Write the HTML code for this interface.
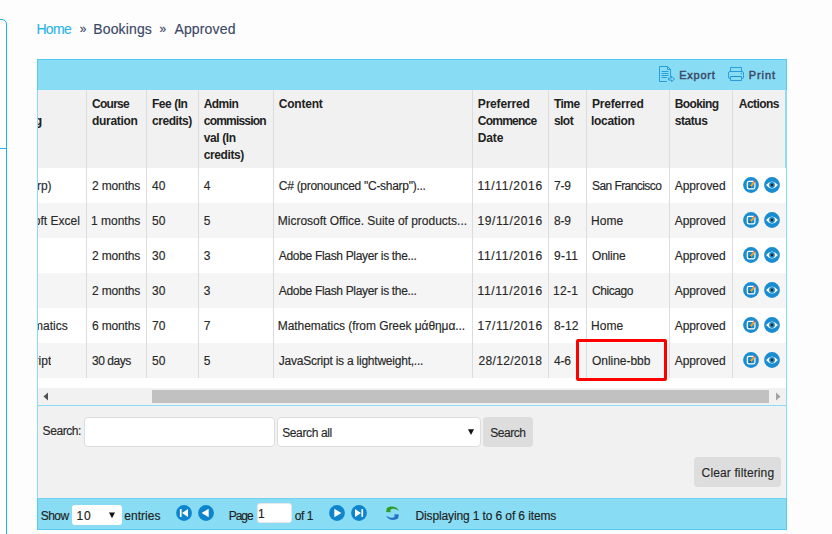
<!DOCTYPE html>
<html><head><meta charset="utf-8"><title>Bookings - Approved</title>
<style>
html,body{margin:0;padding:0}
body{width:832px;height:534px;overflow:hidden;background:#fdfdfd;font-family:"Liberation Sans",sans-serif;font-size:12px;line-height:17px;color:#333;position:relative}
.a{position:absolute}
.t{position:absolute;white-space:nowrap;line-height:17px;height:17px;-webkit-text-stroke:0.15px currentColor}
.b{font-weight:700;-webkit-text-stroke:0 currentColor}
.c{position:absolute;left:38px;width:48px;height:17px;overflow:hidden}
.c span{position:absolute;right:0;top:0;white-space:nowrap;-webkit-text-stroke:0.15px currentColor}
svg{position:absolute;overflow:visible}
</style></head><body>

<div class="a" style="left:-20px;top:19px;width:27px;height:560px;border:1px solid #1cb3e9;border-radius:5px;background:#fefefe;box-sizing:border-box"></div>
<div class="a" style="left:0;top:148px;width:6px;height:1px;background:#1cb3e9"></div>
<div class="a" style="left:37px;top:59px;width:750px;height:31px;background:#88dcf4;border:1px solid #55caef;border-bottom:none;box-sizing:border-box"></div>
<div class="a" style="left:37px;top:90px;width:750px;height:78px;background:#f1f1f1"></div>
<div class="a" style="left:37px;top:168px;width:750px;height:35px;background:#ffffff"></div>
<div class="a" style="left:37px;top:203px;width:750px;height:35px;background:#f5f5f5"></div>
<div class="a" style="left:37px;top:238px;width:750px;height:35px;background:#ffffff"></div>
<div class="a" style="left:37px;top:273px;width:750px;height:35px;background:#f5f5f5"></div>
<div class="a" style="left:37px;top:308px;width:750px;height:35px;background:#ffffff"></div>
<div class="a" style="left:37px;top:343px;width:750px;height:35px;background:#f5f5f5"></div>
<div class="a" style="left:37px;top:378px;width:750px;height:10px;background:#ffffff"></div>
<div class="a" style="left:86px;top:90px;width:1px;height:288px;background:#dcdcdc"></div>
<div class="a" style="left:146px;top:90px;width:1px;height:288px;background:#dcdcdc"></div>
<div class="a" style="left:198px;top:90px;width:1px;height:288px;background:#dcdcdc"></div>
<div class="a" style="left:273px;top:90px;width:1px;height:288px;background:#dcdcdc"></div>
<div class="a" style="left:472px;top:90px;width:1px;height:288px;background:#dcdcdc"></div>
<div class="a" style="left:548px;top:90px;width:1px;height:288px;background:#dcdcdc"></div>
<div class="a" style="left:586px;top:90px;width:1px;height:288px;background:#dcdcdc"></div>
<div class="a" style="left:669px;top:90px;width:1px;height:288px;background:#dcdcdc"></div>
<div class="a" style="left:732px;top:90px;width:1px;height:288px;background:#dcdcdc"></div>
<div class="a" style="left:37px;top:388px;width:750px;height:17px;background:#f1f1f1"></div>
<div class="a" style="left:152px;top:390px;width:617px;height:13px;background:#c1c1c1"></div>
<svg style="left:43px;top:392px" width="6" height="9" viewBox="0 0 6 9"><path d="M5 0.5 L5 8.5 L0.5 4.5 Z" fill="#505050"/></svg>
<svg style="left:775px;top:392px" width="6" height="9" viewBox="0 0 6 9"><path d="M1 0.5 L1 8.5 L5.5 4.5 Z" fill="#a3a3a3"/></svg>
<div class="a" style="left:37px;top:405px;width:750px;height:1px;background:#8bdcf4"></div>
<div class="a" style="left:37px;top:406px;width:750px;height:92px;background:#f1f1f1"></div>
<div class="a" style="left:37px;top:498px;width:750px;height:32px;background:#88dcf4;border:1px solid #55caef;border-top-color:#6fd2f1;box-sizing:border-box"></div>
<div class="a" style="left:37px;top:90px;width:1px;height:408px;background:#8bdcf4"></div>
<div class="a" style="left:786px;top:90px;width:1px;height:408px;background:#8bdcf4"></div>
<div class="a" style="left:785px;top:90px;width:1px;height:78px;background:#8bdcf4"></div>
<div class="a" style="left:84px;top:417px;width:191px;height:30px;background:#fff;border:1px solid #dddddd;border-radius:4px;box-sizing:border-box"></div>
<div class="a" style="left:277px;top:417px;width:204px;height:30px;background:#fff;border:1px solid #dddddd;border-radius:4px;box-sizing:border-box"></div>
<svg style="left:468px;top:429px" width="6" height="6" viewBox="0 0 6 6"><path d="M0 0.2 L6 0.2 L3 6 Z" fill="#111"/></svg>
<div class="a" style="left:483px;top:417px;width:50px;height:30px;background:#dddddd;border-radius:4px"></div>
<div class="a" style="left:694px;top:457px;width:87px;height:30px;background:#dddddd;border-radius:4px"></div>
<div class="a" style="left:72px;top:505px;width:50px;height:19.5px;background:#fff;border-radius:3px"></div>
<svg style="left:109px;top:512px" width="6" height="6" viewBox="0 0 6 6"><path d="M0 0.4 L6 0.4 L3 6.2 Z" fill="#111"/></svg>
<div class="a" style="left:257px;top:503px;width:35px;height:20px;background:#fff;border:1px solid #e6e6e6;border-radius:3px;box-sizing:border-box"></div>
<svg style="left:176px;top:505px" width="16" height="16" viewBox="0 0 16 16"><circle cx="8" cy="8" r="7.9" fill="#0e84cd"/><rect x="3.9" y="4.1" width="1.7" height="7.8" fill="#fff"/><path d="M6 8 L12 3.9 L12 12.1 Z" fill="#fff"/></svg>
<svg style="left:198px;top:505px" width="16" height="16" viewBox="0 0 16 16"><circle cx="8" cy="8" r="7.9" fill="#0e84cd"/><path d="M3.6 8 L10.7 3.8 L10.7 12.2 Z" fill="#fff"/></svg>
<svg style="left:329px;top:505px" width="16" height="16" viewBox="0 0 16 16"><circle cx="8" cy="8" r="7.9" fill="#0e84cd"/><path d="M12.4 8 L5.3 3.8 L5.3 12.2 Z" fill="#fff"/></svg>
<svg style="left:351px;top:505px" width="16" height="16" viewBox="0 0 16 16"><circle cx="8" cy="8" r="7.9" fill="#0e84cd"/><rect x="10.4" y="4.1" width="1.7" height="7.8" fill="#fff"/><path d="M10 8 L4 3.9 L4 12.1 Z" fill="#fff"/></svg>
<svg style="left:385px;top:506px" width="16" height="15" viewBox="0 0 16 15"><path d="M1.1 6 L1.9 1.9 Q6.5 -0.7 11 1.5 Q13 2.7 13.9 4.8 Q10.5 2.3 7.6 2.7 Q5.9 3 5.3 4 L5.7 6.3 Z" fill="#2f9d22"/><path d="M1.1 6 L1.9 1.9 Q6.5 -0.7 11 1.5 Q13 2.7 13.9 4.8 Q10.5 2.3 7.6 2.7 Q5.9 3 5.3 4 L5.7 6.3 Z" fill="#2473c0" transform="rotate(180 7.5 7.25)"/></svg>
<svg style="left:743px;top:177px" width="16" height="16" viewBox="0 0 16 16"><circle cx="8" cy="8" r="7.9" fill="#1a8cd0"/><rect x="4.3" y="4.4" width="7.6" height="7.4" rx="1.6" fill="none" stroke="#fff" stroke-width="1.2"/><path d="M6.9 8.9 L10.3 4.6 L11.8 5.8 L8.4 10.1 Z" fill="#f7a11a"/><path d="M10.3 4.6 L11.1 3.6 L12.6 4.8 L11.8 5.8 Z" fill="#e8464b"/><path d="M6.9 8.9 L8.4 10.1 L6.2 10.9 Z" fill="#1d2b3a"/></svg>
<svg style="left:764px;top:177px" width="16" height="16" viewBox="0 0 16 16"><circle cx="8" cy="8" r="7.9" fill="#1a8cd0"/><path d="M2 8 Q8 0.8 14 8 Q8 15.2 2 8 Z" fill="#fff"/><circle cx="8" cy="8" r="2.9" fill="#1b86c6"/><circle cx="8" cy="8" r="1.2" fill="#222"/></svg>
<svg style="left:743px;top:212px" width="16" height="16" viewBox="0 0 16 16"><circle cx="8" cy="8" r="7.9" fill="#1a8cd0"/><rect x="4.3" y="4.4" width="7.6" height="7.4" rx="1.6" fill="none" stroke="#fff" stroke-width="1.2"/><path d="M6.9 8.9 L10.3 4.6 L11.8 5.8 L8.4 10.1 Z" fill="#f7a11a"/><path d="M10.3 4.6 L11.1 3.6 L12.6 4.8 L11.8 5.8 Z" fill="#e8464b"/><path d="M6.9 8.9 L8.4 10.1 L6.2 10.9 Z" fill="#1d2b3a"/></svg>
<svg style="left:764px;top:212px" width="16" height="16" viewBox="0 0 16 16"><circle cx="8" cy="8" r="7.9" fill="#1a8cd0"/><path d="M2 8 Q8 0.8 14 8 Q8 15.2 2 8 Z" fill="#fff"/><circle cx="8" cy="8" r="2.9" fill="#1b86c6"/><circle cx="8" cy="8" r="1.2" fill="#222"/></svg>
<svg style="left:743px;top:247px" width="16" height="16" viewBox="0 0 16 16"><circle cx="8" cy="8" r="7.9" fill="#1a8cd0"/><rect x="4.3" y="4.4" width="7.6" height="7.4" rx="1.6" fill="none" stroke="#fff" stroke-width="1.2"/><path d="M6.9 8.9 L10.3 4.6 L11.8 5.8 L8.4 10.1 Z" fill="#f7a11a"/><path d="M10.3 4.6 L11.1 3.6 L12.6 4.8 L11.8 5.8 Z" fill="#e8464b"/><path d="M6.9 8.9 L8.4 10.1 L6.2 10.9 Z" fill="#1d2b3a"/></svg>
<svg style="left:764px;top:247px" width="16" height="16" viewBox="0 0 16 16"><circle cx="8" cy="8" r="7.9" fill="#1a8cd0"/><path d="M2 8 Q8 0.8 14 8 Q8 15.2 2 8 Z" fill="#fff"/><circle cx="8" cy="8" r="2.9" fill="#1b86c6"/><circle cx="8" cy="8" r="1.2" fill="#222"/></svg>
<svg style="left:743px;top:282px" width="16" height="16" viewBox="0 0 16 16"><circle cx="8" cy="8" r="7.9" fill="#1a8cd0"/><rect x="4.3" y="4.4" width="7.6" height="7.4" rx="1.6" fill="none" stroke="#fff" stroke-width="1.2"/><path d="M6.9 8.9 L10.3 4.6 L11.8 5.8 L8.4 10.1 Z" fill="#f7a11a"/><path d="M10.3 4.6 L11.1 3.6 L12.6 4.8 L11.8 5.8 Z" fill="#e8464b"/><path d="M6.9 8.9 L8.4 10.1 L6.2 10.9 Z" fill="#1d2b3a"/></svg>
<svg style="left:764px;top:282px" width="16" height="16" viewBox="0 0 16 16"><circle cx="8" cy="8" r="7.9" fill="#1a8cd0"/><path d="M2 8 Q8 0.8 14 8 Q8 15.2 2 8 Z" fill="#fff"/><circle cx="8" cy="8" r="2.9" fill="#1b86c6"/><circle cx="8" cy="8" r="1.2" fill="#222"/></svg>
<svg style="left:743px;top:317px" width="16" height="16" viewBox="0 0 16 16"><circle cx="8" cy="8" r="7.9" fill="#1a8cd0"/><rect x="4.3" y="4.4" width="7.6" height="7.4" rx="1.6" fill="none" stroke="#fff" stroke-width="1.2"/><path d="M6.9 8.9 L10.3 4.6 L11.8 5.8 L8.4 10.1 Z" fill="#f7a11a"/><path d="M10.3 4.6 L11.1 3.6 L12.6 4.8 L11.8 5.8 Z" fill="#e8464b"/><path d="M6.9 8.9 L8.4 10.1 L6.2 10.9 Z" fill="#1d2b3a"/></svg>
<svg style="left:764px;top:317px" width="16" height="16" viewBox="0 0 16 16"><circle cx="8" cy="8" r="7.9" fill="#1a8cd0"/><path d="M2 8 Q8 0.8 14 8 Q8 15.2 2 8 Z" fill="#fff"/><circle cx="8" cy="8" r="2.9" fill="#1b86c6"/><circle cx="8" cy="8" r="1.2" fill="#222"/></svg>
<svg style="left:743px;top:352px" width="16" height="16" viewBox="0 0 16 16"><circle cx="8" cy="8" r="7.9" fill="#1a8cd0"/><rect x="4.3" y="4.4" width="7.6" height="7.4" rx="1.6" fill="none" stroke="#fff" stroke-width="1.2"/><path d="M6.9 8.9 L10.3 4.6 L11.8 5.8 L8.4 10.1 Z" fill="#f7a11a"/><path d="M10.3 4.6 L11.1 3.6 L12.6 4.8 L11.8 5.8 Z" fill="#e8464b"/><path d="M6.9 8.9 L8.4 10.1 L6.2 10.9 Z" fill="#1d2b3a"/></svg>
<svg style="left:764px;top:352px" width="16" height="16" viewBox="0 0 16 16"><circle cx="8" cy="8" r="7.9" fill="#1a8cd0"/><path d="M2 8 Q8 0.8 14 8 Q8 15.2 2 8 Z" fill="#fff"/><circle cx="8" cy="8" r="2.9" fill="#1b86c6"/><circle cx="8" cy="8" r="1.2" fill="#222"/></svg>
<svg style="left:658px;top:65px" width="18" height="18" viewBox="0 0 18 18" fill="none" stroke="#2a9ddb" stroke-width="1"><path d="M1.5 1.5 L9.5 1.5 L12.5 4.5 L12.5 12 M9 16.5 L1.5 16.5 L1.5 1.5 M9.5 1.5 L9.5 4.5 L12.5 4.5"/><path d="M3.5 6.5 H10.5 M3.5 8.5 H10.5 M3.5 10.5 H10.5 M3.5 12.5 H9"/><path d="M10.5 13 H13.5 V11.3 L16.6 14 L13.5 16.7 V15 H10.5 Z" fill="#88dcf4"/></svg>
<svg style="left:727px;top:66px" width="18" height="16" viewBox="0 0 18 16" fill="none" stroke="#2a9ddb" stroke-width="1"><path d="M3.5 5.5 V1.5 H14.5 V5.5"/><rect x="1.5" y="5.5" width="15" height="7" rx="1.5"/><path d="M3.5 10.5 H14.5 V14.5 H3.5 Z" fill="#88dcf4"/><path d="M4.5 10.5 H13.5" stroke="#1f8fd0"/><circle cx="14.3" cy="7.6" r="0.4"/></svg>
<span class="t" style="left:36.40px;top:21px;color:#2bb4e8;font-size:14px;letter-spacing:-0.633px">Home</span>
<span class="t" style="left:79.70px;top:21px;color:#3c4866">»</span>
<span class="t" style="left:93.30px;top:21px;color:#3c4866;font-size:14px;letter-spacing:0.129px">Bookings</span>
<span class="t" style="left:159.60px;top:21px;color:#3c4866">»</span>
<span class="t" style="left:174.40px;top:21px;color:#3c4866;font-size:14px;letter-spacing:0.157px">Approved</span>
<span class="t" style="left:679.30px;top:67px;color:#3c4866;font-size:11px;letter-spacing:0.740px;-webkit-text-stroke:0.45px currentColor">Export</span>
<span class="t" style="left:748.80px;top:67px;color:#3c4866;font-size:11px;letter-spacing:0.900px;-webkit-text-stroke:0.45px currentColor">Print</span>
<span class="t b" style="left:92.00px;top:96px;color:#222222;letter-spacing:-0.720px">Course</span>
<span class="t b" style="left:92.00px;top:113px;color:#222222;letter-spacing:-0.314px">duration</span>
<span class="t b" style="left:152.00px;top:96px;color:#222222;letter-spacing:-0.467px">Fee (In</span>
<span class="t b" style="left:152.00px;top:113px;color:#222222;letter-spacing:-0.443px">credits)</span>
<span class="t b" style="left:203.80px;top:96px;color:#222222;letter-spacing:-0.600px">Admin</span>
<span class="t b" style="left:203.80px;top:113px;color:#222222;letter-spacing:-0.800px">commission</span>
<span class="t b" style="left:203.80px;top:130px;color:#222222;letter-spacing:-0.417px">val (In</span>
<span class="t b" style="left:203.80px;top:147px;color:#222222;letter-spacing:-0.400px">credits)</span>
<span class="t b" style="left:278.80px;top:96px;color:#222222;letter-spacing:-0.217px">Content</span>
<span class="t b" style="left:477.80px;top:96px;color:#222222;letter-spacing:-0.175px">Preferred</span>
<span class="t b" style="left:477.80px;top:113px;color:#222222;letter-spacing:-0.757px">Commence</span>
<span class="t b" style="left:477.80px;top:130px;color:#222222;letter-spacing:-0.133px">Date</span>
<span class="t b" style="left:554.00px;top:96px;color:#222222;letter-spacing:-0.567px">Time</span>
<span class="t b" style="left:554.00px;top:113px;color:#222222;letter-spacing:-0.567px">slot</span>
<span class="t b" style="left:592.00px;top:96px;color:#222222;letter-spacing:-0.200px">Preferred</span>
<span class="t b" style="left:591.00px;top:113px;color:#222222;letter-spacing:-0.314px">location</span>
<span class="t b" style="left:674.70px;top:96px;color:#222222;letter-spacing:-0.617px">Booking</span>
<span class="t b" style="left:674.70px;top:113px;color:#222222;letter-spacing:-0.440px">status</span>
<span class="t b" style="left:738.80px;top:96px;color:#222222;letter-spacing:-0.550px">Actions</span>
<span class="t" style="left:92.00px;top:178px;color:#282828;letter-spacing:-0.143px">2 months</span>
<span class="t" style="left:152.00px;top:178px;color:#282828">40</span>
<span class="t" style="left:203.80px;top:178px;color:#282828">4</span>
<span class="t" style="left:278.80px;top:178px;color:#282828;letter-spacing:-0.278px">C# (pronounced "C-sharp")...</span>
<span class="t" style="left:477.40px;top:178px;color:#282828;letter-spacing:0.722px">11/11/2016</span>
<span class="t" style="left:554.00px;top:178px;color:#282828;letter-spacing:-0.200px">7-9</span>
<span class="t" style="left:592.00px;top:178px;color:#282828;letter-spacing:-0.567px">San Francisco</span>
<span class="t" style="left:674.70px;top:178px;color:#282828;letter-spacing:-0.057px">Approved</span>
<span class="t" style="left:91.00px;top:213px;color:#282828">1 months</span>
<span class="t" style="left:152.00px;top:213px;color:#282828">50</span>
<span class="t" style="left:203.80px;top:213px;color:#282828">5</span>
<span class="t" style="left:277.80px;top:213px;color:#282828;letter-spacing:-0.016px">Microsoft Office. Suite of products...</span>
<span class="t" style="left:477.40px;top:213px;color:#282828;letter-spacing:0.611px">19/11/2016</span>
<span class="t" style="left:554.00px;top:213px;color:#282828;letter-spacing:-0.200px">8-9</span>
<span class="t" style="left:591.00px;top:213px;color:#282828;letter-spacing:0.033px">Home</span>
<span class="t" style="left:674.70px;top:213px;color:#282828;letter-spacing:-0.057px">Approved</span>
<span class="t" style="left:92.00px;top:248px;color:#282828;letter-spacing:-0.143px">2 months</span>
<span class="t" style="left:152.00px;top:248px;color:#282828">30</span>
<span class="t" style="left:203.80px;top:248px;color:#282828">3</span>
<span class="t" style="left:278.80px;top:248px;color:#282828;letter-spacing:-0.319px">Adobe Flash Player is the...</span>
<span class="t" style="left:477.40px;top:248px;color:#282828;letter-spacing:0.722px">11/11/2016</span>
<span class="t" style="left:554.00px;top:248px;color:#282828;letter-spacing:0.267px">9-11</span>
<span class="t" style="left:592.00px;top:248px;color:#282828;letter-spacing:-0.200px">Online</span>
<span class="t" style="left:674.70px;top:248px;color:#282828;letter-spacing:-0.057px">Approved</span>
<span class="t" style="left:92.00px;top:283px;color:#282828;letter-spacing:-0.143px">2 months</span>
<span class="t" style="left:152.00px;top:283px;color:#282828">30</span>
<span class="t" style="left:203.80px;top:283px;color:#282828">3</span>
<span class="t" style="left:278.80px;top:283px;color:#282828;letter-spacing:-0.319px">Adobe Flash Player is the...</span>
<span class="t" style="left:477.40px;top:283px;color:#282828;letter-spacing:0.722px">11/11/2016</span>
<span class="t" style="left:553.00px;top:283px;color:#282828;letter-spacing:0.267px">12-1</span>
<span class="t" style="left:592.00px;top:283px;color:#282828;letter-spacing:-0.433px">Chicago</span>
<span class="t" style="left:674.70px;top:283px;color:#282828;letter-spacing:-0.057px">Approved</span>
<span class="t" style="left:92.00px;top:318px;color:#282828;letter-spacing:-0.171px">6 months</span>
<span class="t" style="left:152.00px;top:318px;color:#282828">70</span>
<span class="t" style="left:203.80px;top:318px;color:#282828">7</span>
<span class="t" style="left:277.80px;top:318px;color:#282828;letter-spacing:-0.075px">Mathematics (from Greek μάθημα...</span>
<span class="t" style="left:477.40px;top:318px;color:#282828;letter-spacing:0.611px">17/11/2016</span>
<span class="t" style="left:554.00px;top:318px;color:#282828;letter-spacing:0.133px">8-12</span>
<span class="t" style="left:591.00px;top:318px;color:#282828;letter-spacing:0.033px">Home</span>
<span class="t" style="left:674.70px;top:318px;color:#282828;letter-spacing:-0.057px">Approved</span>
<span class="t" style="left:92.00px;top:353px;color:#282828;letter-spacing:-0.467px">30 days</span>
<span class="t" style="left:152.00px;top:353px;color:#282828">50</span>
<span class="t" style="left:203.80px;top:353px;color:#282828">5</span>
<span class="t" style="left:278.80px;top:353px;color:#282828;letter-spacing:-0.227px">JavaScript is a lightweight,...</span>
<span class="t" style="left:478.40px;top:353px;color:#282828;letter-spacing:0.389px">28/12/2018</span>
<span class="t" style="left:554.00px;top:353px;color:#282828;letter-spacing:-0.200px">4-6</span>
<span class="t" style="left:592.00px;top:353px;color:#282828;letter-spacing:-0.044px">Online-bbb</span>
<span class="t" style="left:674.70px;top:353px;color:#282828;letter-spacing:-0.057px">Approved</span>
<span class="t" style="left:42.60px;top:423px;color:#282828;letter-spacing:-0.433px">Search:</span>
<span class="t" style="left:282.20px;top:425px;color:#282828;letter-spacing:-0.378px">Search all</span>
<span class="t" style="left:490.30px;top:425px;color:#282828;letter-spacing:-0.460px">Search</span>
<span class="t" style="left:701.60px;top:465px;color:#282828;letter-spacing:0.129px">Clear filtering</span>
<span class="t" style="left:40.70px;top:508px;color:#222222;letter-spacing:-0.533px">Show</span>
<span class="t" style="left:76.40px;top:508px;color:#222222;letter-spacing:1.000px">10</span>
<span class="t" style="left:124.30px;top:508px;color:#222222;letter-spacing:0.033px">entries</span>
<span class="t" style="left:228.70px;top:508px;color:#222222;letter-spacing:-1.000px">Page</span>
<span class="t" style="left:258.00px;top:506px;color:#222222">1</span>
<span class="t" style="left:294.70px;top:508px;color:#222222;letter-spacing:-0.467px">of 1</span>
<span class="t" style="left:415.40px;top:508px;color:#222222;letter-spacing:-0.115px">Displaying 1 to 6 of 6 items</span>
<div class="c" style="top:113px;width:4.0px;color:#222222;font-weight:700"><span>Booking</span></div>
<div class="c" style="top:178px;width:13.6px;color:#282828"><span>C# (C-Sharp)</span></div>
<div class="c" style="top:213px;width:41.9px;color:#282828"><span>Microsoft Excel</span></div>
<div class="c" style="top:318px;width:29.7px;color:#282828"><span>Mathematics</span></div>
<div class="c" style="top:353px;width:13.3px;color:#282828"><span>JavaScript</span></div>
<div class="a" style="left:576px;top:339px;width:91px;height:42px;border:3px solid #fe0000;border-radius:2px;box-sizing:border-box"></div>
</body></html>
